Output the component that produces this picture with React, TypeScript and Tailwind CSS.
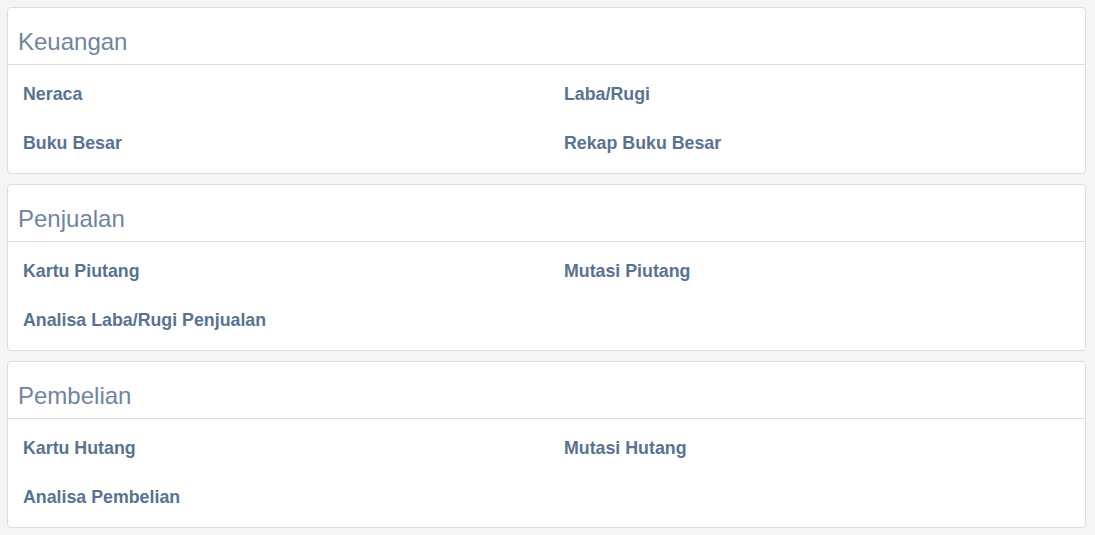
const sections = [
	{
		title: 'Keuangan',
		links: ['Neraca', 'Laba/Rugi', 'Buku Besar', 'Rekap Buku Besar']
	},
	{
		title: 'Penjualan',
		links: ['Kartu Piutang', 'Mutasi Piutang', 'Analisa Laba/Rugi Penjualan']
	},
	{
		title: 'Pembelian',
		links: ['Kartu Hutang', 'Mutasi Hutang', 'Analisa Pembelian']
	}
];

function ReportPanel({ title, links }: { title: string; links: string[] }) {
	return (
		<div className="rounded-[4px] border border-[#dddddd] bg-white">
			<div className="border-b border-[#dddddd] pt-[20px] pb-[8px] pl-[10px]">
				<h3 className="text-[24px] leading-[28px] font-normal text-[#70859f]">
					{title}
				</h3>
			</div>
			<div className="grid grid-cols-[541px_1fr] py-[5px] pl-[15px]">
				{links.map((link) => (
					<a
						key={link}
						href="#"
						className="text-[17.8px] leading-[49px] font-bold text-[#587392]"
					>
						{link}
					</a>
				))}
			</div>
		</div>
	);
}

export default function App() {
	return (
		<div
			className="flex min-h-[535px] flex-col gap-[10px] bg-[#f5f5f5] pt-[7px] pr-[9px] pb-[7px] pl-[7px]"
			style={{ fontFamily: '"Liberation Sans", Arial, sans-serif' }}
		>
			{sections.map((section) => (
				<ReportPanel key={section.title} {...section} />
			))}
		</div>
	);
}
